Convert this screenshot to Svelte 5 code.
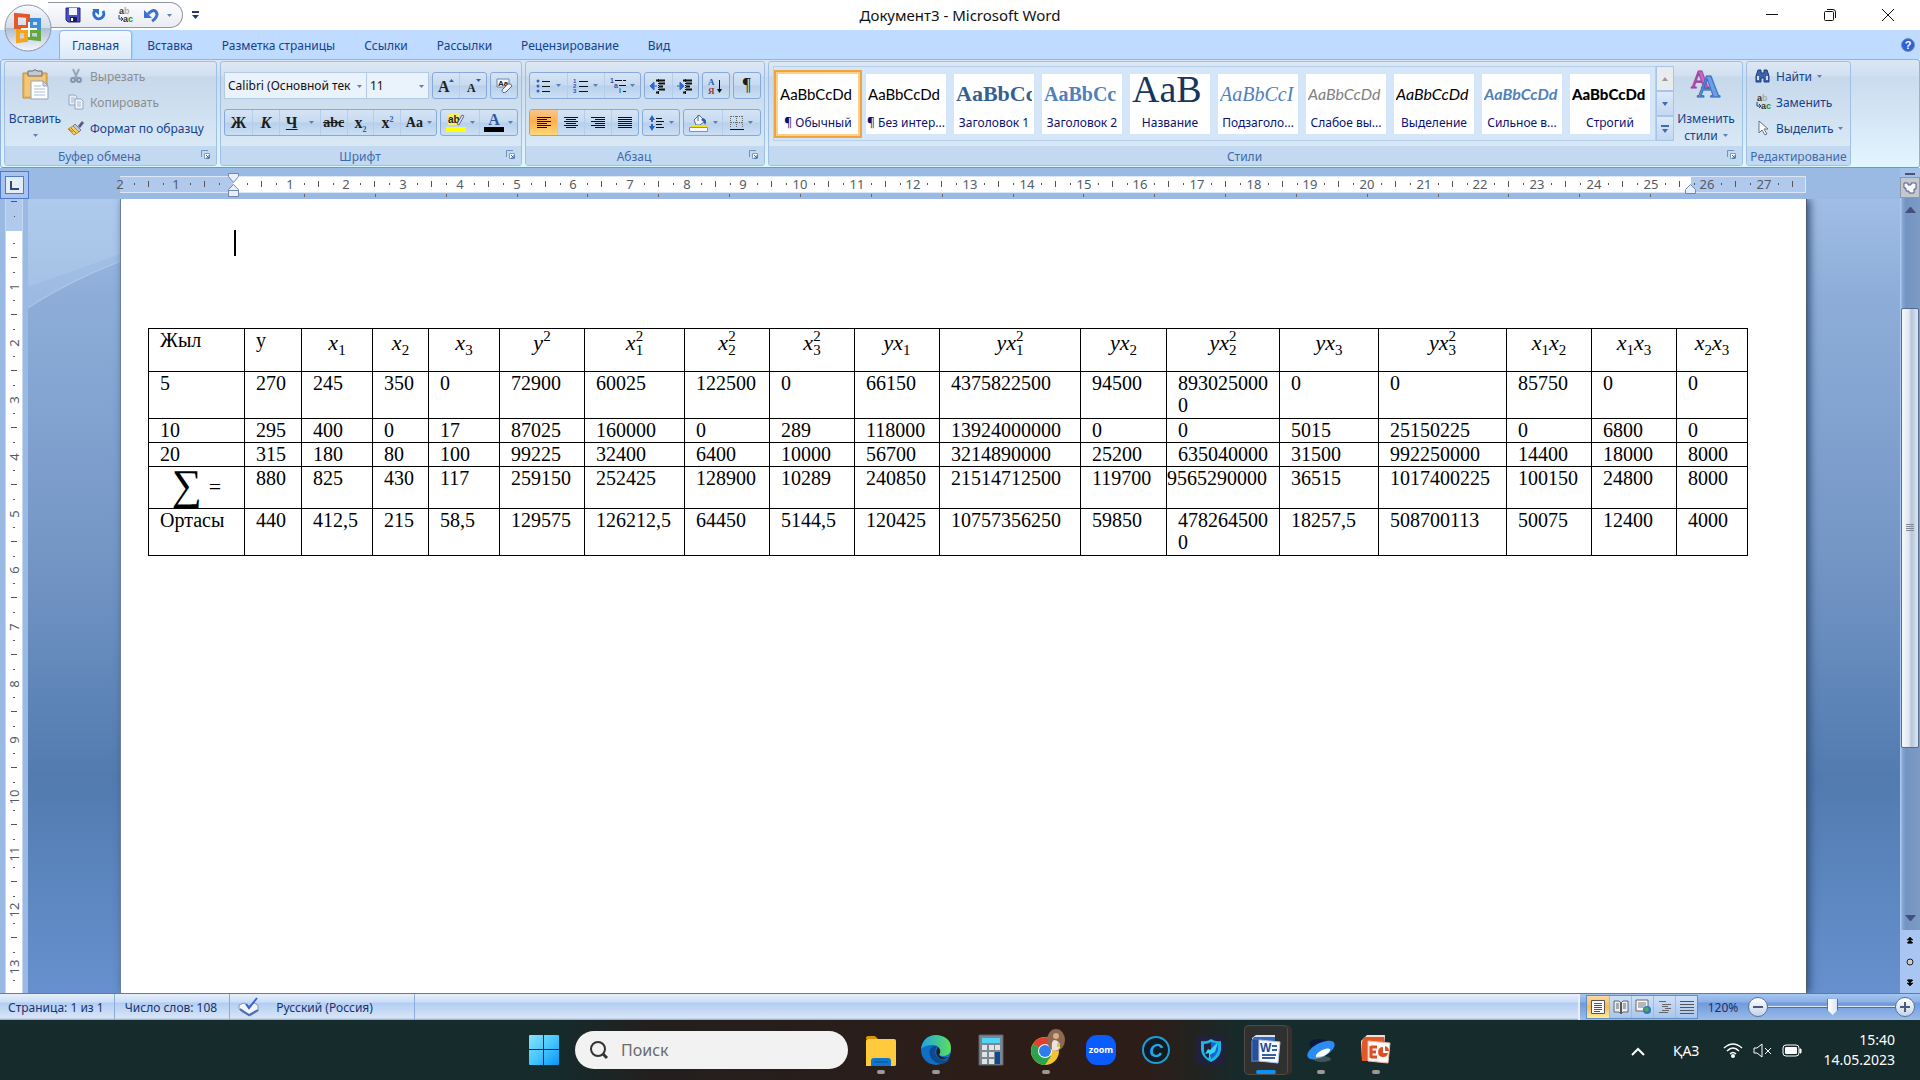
<script>
  const CM = 56.7;

  const tabs = ['Главная', 'Вставка', 'Разметка страницы', 'Ссылки', 'Рассылки', 'Рецензирование', 'Вид'];
  let activeTab = $state('Главная');

  const styles = [
    { sample: 'AaBbCcDd', name: '¶ Обычный', kind: 'normal' },
    { sample: 'AaBbCcDd', name: '¶ Без интер...', kind: 'normal' },
    { sample: 'AaBbCc', name: 'Заголовок 1', kind: 'head1' },
    { sample: 'AaBbCc', name: 'Заголовок 2', kind: 'head2' },
    { sample: 'AaB', name: 'Название', kind: 'title' },
    { sample: 'AaBbCcI', name: 'Подзаголо...', kind: 'sub' },
    { sample: 'AaBbCcDd', name: 'Слабое вы...', kind: 'weak' },
    { sample: 'AaBbCcDd', name: 'Выделение', kind: 'em' },
    { sample: 'AaBbCcDd', name: 'Сильное в...', kind: 'strongem' },
    { sample: 'AaBbCcDd', name: 'Строгий', kind: 'strong' }
  ];
  let activeStyle = $state(0);

  // column widths of the document table
  const cols = [96, 57, 71, 56, 71, 85, 100, 85, 85, 85, 141, 86, 113, 99, 128, 85, 85, 71];

  // header formulas: [letter, subscript, superscript]
  const head = [
    [['x', '1']],
    [['x', '2']],
    [['x', '3']],
    [['y', '', '2']],
    [['x', '1', '2']],
    [['x', '2', '2']],
    [['x', '3', '2']],
    [['y'], ['x', '1']],
    [['y'], ['x', '1', '2']],
    [['y'], ['x', '2']],
    [['y'], ['x', '2', '2']],
    [['y'], ['x', '3']],
    [['y'], ['x', '3', '2']],
    [['x', '1'], ['x', '2']],
    [['x', '1'], ['x', '3']],
    [['x', '2'], ['x', '3']]
  ];

  const rows = [
    { h: 47, cells: ['5', '270', '245', '350', '0', '72900', '60025', '122500', '0', '66150', '4375822500', '94500', '8930250000', '0', '0', '85750', '0', '0'] },
    { h: 24, cells: ['10', '295', '400', '0', '17', '87025', '160000', '0', '289', '118000', '13924000000', '0', '0', '5015', '25150225', '0', '6800', '0'] },
    { h: 24, cells: ['20', '315', '180', '80', '100', '99225', '32400', '6400', '10000', '56700', '3214890000', '25200', '635040000', '31500', '992250000', '14400', '18000', '8000'] },
    { h: 42, sum: true, cells: ['∑', '880', '825', '430', '117', '259150', '252425', '128900', '10289', '240850', '21514712500', '119700', '9565290000', '36515', '1017400225', '100150', '24800', '8000'] },
    { h: 47, cells: ['Ортасы', '440', '412,5', '215', '58,5', '129575', '126212,5', '64450', '5144,5', '120425', '10757356250', '59850', '4782645000', '18257,5', '508700113', '50075', '12400', '4000'] }
  ];

  const rulerMarks = Array.from({ length: 30 }, (_, i) => i - 2);
  const sideMarks = Array.from({ length: 15 }, (_, i) => i);
  const tabStops = Array.from({ length: 20 }, (_, i) => Math.round(184 + i * 70.85));

  const apps = [
    { id: 'explorer', label: 'Проводник', open: true },
    { id: 'edge', label: 'Microsoft Edge', open: true },
    { id: 'calc', label: 'Калькулятор' },
    { id: 'chrome', label: 'Google Chrome', open: true },
    { id: 'zoom', label: 'Zoom' },
    { id: 'ccleaner', label: 'C' },
    { id: 'shield', label: 'Защита' },
    { id: 'word', label: 'Microsoft Word', open: true, active: true },
    { id: 'disk', label: 'Диск', open: true },
    { id: 'ppt', label: 'PowerPoint', open: true }
  ];

  let zoom = $state(51);

  const icons = {
    save: '<path d="M1 1h14v14H3l-2-2z" fill="#4a4fc4" stroke="#26267e"/><path d="M4 1h8v7H4z" fill="#eef3ff"/><path d="M5 10h7v5H5z" fill="#1d1d52"/><path d="M6 11h2v3H6z" fill="#fff"/>',
    redo: '<path d="M4 3.500A5 5 0 1 0 12 4" fill="none" stroke="#2c6fd0" stroke-width="3"/><path d="M1 2h7v6z" fill="#2c6fd0"/>',
    undo: '<path d="M5 7q7-7 9 0 0 4-5 7" fill="none" stroke="#3b6fd4" stroke-width="3"/><path d="M1 3v8h8z" fill="#3b6fd4"/>',
    replace: '<text x="2" y="7" font-family="Liberation Sans" font-size="9" font-weight="bold" fill="#333">a<tspan fill="#aaa">b</tspan></text><path d="M2 8v4h4M4 10l2 2-2 2" fill="none" stroke="#27406e"/><text x="6" y="15" font-family="Liberation Sans" font-size="9" font-weight="bold" fill="#333">a<tspan fill="#169030">c</tspan></text>',
    cut: '<path d="M5 1l4 9M11 1L7 10" stroke="#9aa6ba" stroke-width="2" fill="none"/><circle cx="5" cy="12" r="2" fill="none" stroke="#8494ad" stroke-width="2"/><circle cx="11" cy="12" r="2" fill="none" stroke="#8494ad" stroke-width="2"/>',
    copy: '<path d="M1 1h6l2 2v8H1z" fill="#e9eff8" stroke="#93a4bf"/><path d="M3 4h4M3 6h4M3 8h3" stroke="#a7b6ce"/><path d="M7 5h6l2 2v8H7z" fill="#f3f6fb" stroke="#93a4bf"/><path d="M9 8h4M9 10h4M9 12h4" stroke="#a7b6ce"/>',
    brush: '<path d="M10 6l4-5 2 2-4 5z" fill="#5a5a7c"/><path d="M7 4l6 6-2 2-6-6z" fill="#c4c6d8" stroke="#77799a"/><path d="M5 6l6 6-5 3-6-6z" fill="#f3cf6b" stroke="#c08a28"/><path d="M3 8l5 5M1 9l4 3" stroke="#a97720"/>',
    paste: '<path d="M1 4h24v25H1z" fill="#ecb95c" stroke="#c68c38"/><path d="M3 6h20v21H3z" fill="#f3c774"/><path d="M6 2h5q2-3 4 0h5v5H6z" fill="#c3c8d1" stroke="#686e79"/><path d="M9 12h12l5 5v13H9z" fill="#fff" stroke="#8ea3c4"/><path d="M21 12v5h5z" fill="#cfdcf0" stroke="#8ea3c4"/><path d="M12 17h7M12 20h11M12 23h11M12 26h11" stroke="#a8bbd8"/>',
    eraser: '<path d="M1 1h12v8H1z" fill="#f5f8fd" stroke="#7182a8"/><text x="2" y="8" font-family="Liberation Sans" font-size="8" font-weight="bold" fill="#222">Aa</text><path d="M6 12l6-6q3-1 4 2l-6 6q-4 2-4-2z" fill="#f4f6fa" stroke="#596a8e"/>',
    grow: '<text x="0" y="14" font-family="Liberation Serif" font-size="16" font-weight="bold" fill="#222">A</text><path d="M11 4h5l-2.500-3z" fill="#2c5fa9"/>',
    shrink: '<text x="2" y="14" font-family="Liberation Serif" font-size="12" font-weight="bold" fill="#222">A</text><path d="M11 1h5l-2.500 3z" fill="#2c5fa9"/>',
    bullets: '<circle cx="2" cy="3" r="1.500" fill="#3c62b8"/><circle cx="2" cy="8" r="1.500" fill="#3c62b8"/><circle cx="2" cy="13" r="1.500" fill="#3c62b8"/><path d="M6 3.500h8M6 8.500h8M6 13.500h8" stroke="#111"/>',
    numbers: '<g font-family="Liberation Sans" font-size="6" font-weight="bold" fill="#3154ad"><text x="0" y="5">1</text><text x="0" y="10">2</text><text x="0" y="15">3</text></g><path d="M6 3.500h9M6 8.500h9M6 13.500h9" stroke="#111"/>',
    multi: '<g font-family="Liberation Sans" font-size="7" font-weight="bold" fill="#3154ad"><text x="0" y="5">1</text><text x="4" y="10">a</text><text x="9" y="15">i</text></g><path d="M5 2.500h11M9 7.500h7M13 13.500h3" stroke="#111" stroke-dasharray="7 1"/>',
    outdent: '<path d="M6 2.500h9M9 5.500h6M9 8.500h4M9 11.500h6M6 14.500h3" stroke="#111" stroke-width="2"/><path d="M8.500 1v15" stroke="#111" stroke-dasharray="1 1"/><path d="M4 4L0 8l4 4zM4 8h3" fill="#3068cf" stroke="#3068cf"/>',
    indent: '<path d="M6 2.500h9M9 5.500h6M9 8.500h4M9 11.500h6M6 14.500h3" stroke="#111" stroke-width="2"/><path d="M8.500 1v15" stroke="#111" stroke-dasharray="1 1"/><path d="M3 4l4 4-4 4zM0 8h3" fill="#3068cf" stroke="#3068cf"/>',
    sort: '<g font-family="Liberation Serif" font-size="9" font-weight="bold"><text x="0" y="7" fill="#2e59a8">А</text><text x="0" y="16" fill="#a03a3a">Я</text></g><path d="M11.500 2v11" stroke="#111"/><path d="M9 11h5l-2.500 4z" fill="#111"/>',
    left: '<path d="M0 1.500h14M0 3.500h10M0 5.500h14M0 7.500h10M0 9.500h14M0 11.500h10" stroke="#111"/>',
    center: '<path d="M0 1.500h14M2 3.500h10M0 5.500h14M2 7.500h10M0 9.500h14M2 11.500h10" stroke="#111"/>',
    right: '<path d="M0 1.500h14M4 3.500h10M0 5.500h14M4 7.500h10M0 9.500h14M4 11.500h10" stroke="#111"/>',
    justify: '<path d="M0 1.500h14M0 3.500h14M0 5.500h14M0 7.500h14M0 9.500h14M0 11.500h14" stroke="#111"/>',
    spacing: '<path d="M3 3v10" stroke="#2c5fc9" stroke-width="2" stroke-dasharray="4 2"/><path d="M0 5l3-5 3 5zM0 11l3 5 3-5z" fill="#2c5fc9"/><path d="M7 3.500h6M7 6.500h8M7 9.500h6M7 12.500h8" stroke="#111"/>',
    fill: '<path d="M5 6l5-5 6 6-5 4H7z" fill="#eef2fa" stroke="#556b95"/><path d="M9 1v6" stroke="#556b95"/><path d="M14 4q5 2 2 7-1-4-4-5z" fill="#35599f"/><path d="M2 12h17" stroke="#f1e500" stroke-width="2"/><path d="M.5 13.500h18v4H.5z" fill="#f5f7fb" stroke="#8291ae"/>',
    borders: '<path d="M1 1.500h12M1 7.500h12M.5 1v12M6.500 1v12M12.500 1v12" stroke="#666" stroke-dasharray="1 1"/><path d="M0 14.500h14" stroke="#111"/>',
    find: '<path d="M3 2h3v3h3V2h3l2 6v6H9v-4H6v4H1V8z" fill="#3d63ae" stroke="#1d3c78"/><path d="M3 8v4M12 8v4" stroke="#cadcf8" stroke-width="2"/>',
    select: '<path d="M4 1v12l3-3 3 5 2-1-3-5h4z" fill="#fff" stroke="#64718c"/>',
    changeStyles: '<g font-family="Liberation Serif" font-weight="bold"><text x="0" y="19" font-size="25" fill="#c86cc0" stroke="#9a3f9c">A</text><text x="6" y="28" font-size="32" fill="#6c9fe6" stroke="#3566b8">A</text></g>',
    launcher: '<path d="M.5 7V.5H7" fill="none" stroke="#6f93bf"/><path d="M3.500 3.500h5v5h-5z" fill="#fff" stroke="#7c9cc4"/><path d="M5 5l3 3M8 5v3H5" stroke="#3f6697" fill="none"/>',
    ruler: '<path d="M1 2h4v2h3V2h5v6h-2v4H6v-2H3V7H1z" fill="#fdfdff" stroke="#4c5a86"/>',
    spell: '<path d="M1 8l5-2 5 3 5-3 4 2v6l-8 5-8-4-3-3z" fill="#f3f5fa" stroke="#8a93a8"/><path d="M2 12l9 6 9-5" stroke="#4a6db4" fill="none" stroke-width="2"/><path d="M8 7l3 4L19 1" stroke="#3264c8" stroke-width="2" fill="none"/>',
    viewPrint: '<path d="M1.500 1.500h13v13h-13z" fill="#fff" stroke="#555"/><path d="M4 4.500h8M4 6.500h8M4 8.500h8M4 10.500h8M4 12.500h6" stroke="#555"/>',
    viewRead: '<path d="M1 2h5l2 2 2-2h5v11h-5l-2 2-2-2H1z" fill="#e9edf4" stroke="#666"/><path d="M3 5h3M3 7h3M3 9h3M10 5h3M10 7h3M10 9h3" stroke="#666"/><path d="M8 4v10" stroke="#555" stroke-width="2"/>',
    viewWeb: '<path d="M1 1h12v11H1z" fill="#f6f8fb" stroke="#666"/><path d="M3 4h8M3 6h8M3 8h6" stroke="#777"/><circle cx="12" cy="11" r="4" fill="#2f78c0"/><path d="M9 10q3-4 5 0-1 4-4 2z" fill="#56a84a"/>',
    viewOutline: '<path d="M2 2.500h7M5 5.500h9M5 7.500h6M8 9.500h6M5 11.500h7M2 13.500h9" stroke="#666"/>',
    viewDraft: '<path d="M1 2.500h14M1 5.500h14M1 8.500h14M1 11.500h14M1 14.500h14" stroke="#555"/>',
    explorer: '<path d="M2 6q0-2 2-2h7l3 3H2z" fill="#d99508"/><path d="M2 9q0-2 2-2h26q2 0 2 2v24q0 1-2 1H2z" fill="#ffcb3c"/><path d="M7 34v-5q0-3 3-3h14q3 0 3 3v5z" fill="#0f76cc"/><path d="M10 30h14" stroke="#0a4f95"/>',
    edge: '<defs><linearGradient id="eg" x1="0" y1="0" x2="1" y2="0"><stop offset="0" stop-color="#1fa3e6"/><stop offset="1" stop-color="#5be05a"/></linearGradient></defs><circle cx="17" cy="18" r="15" fill="#0e6fc4"/><path d="M2 17Q4 3 18 3q14 2 14 13 0 8-8 8-6 0-4-5 1-6-6-6-8 0-12 4z" fill="url(#eg)"/><path d="M15 14q-6 2-4 10 3 7 12 8 5-1 8-5-7 3-12-1-5-5-1-12z" fill="#0b4a93"/><path d="M19 15q4 3 1 8 3 4 9 2-4 4-9 1-5-5-1-11z" fill="#231f1e"/>',
    calc: '<path d="M5 3h24v30H5z" fill="#7d8790" stroke="#59626a"/><path d="M8 6h18v5H8z" fill="#4fd4f7"/><path d="M8 13h5v5H8zM15 13h5v5h-5zM21 13h5v5h-5zM8 20h5v5H8zM15 20h5v5h-5zM8 27h5v5H8zM15 27h5v5h-5z" fill="#dfe3e6"/><path d="M21 20h5v12h-5z" fill="#0d4a8f"/>',
    chrome: '<circle cx="16" cy="19" r="14" fill="#f7c52b"/><path d="M16 19L4 12A14 14 0 0 1 29 14z" fill="#e23f33"/><path d="M16 19L4 12a14 14 0 0 0 12 21l6-9z" fill="#2ba24c"/><circle cx="16" cy="19" r="7" fill="#fff"/><circle cx="16" cy="19" r="6" fill="#2f7cf0"/><ellipse cx="27" cy="8" rx="9" ry="11" fill="#8b6a51"/><path d="M23 18q-1-9 2-10 6 0 6 8-3 4-8 2z" fill="#ece4dc"/><circle cx="27" cy="4" r="3" fill="#d8a98a"/><path d="M28 11h3v4h-3z" fill="#d6c84c"/>',
    zoom: '<rect x="2" y="3" width="30" height="30" rx="11" fill="#0b5cff"/><text x="17" y="21" text-anchor="middle" font-family="Open Sans" font-size="9" font-weight="bold" fill="#fff">zoom</text>',
    ccleaner: '<circle cx="17" cy="18" r="13" fill="#101a20" stroke="#1b9ed6" stroke-width="2"/><text x="17" y="25" text-anchor="middle" font-family="Liberation Sans" font-size="19" font-style="italic" font-weight="bold" fill="#1fa9e2">C</text>',
    shield: '<rect x="2" y="3" width="30" height="30" rx="5" fill="#22213c"/><path d="M7 9q6 1 10-2 5 3 10 2v9q-1 8-10 12Q8 26 7 18z" fill="#18b7e8"/><path d="M17 10q3 1 7 1v7q-1 5-7 9z" fill="#1d5ee0"/><path d="M10 12q4 0 7-2v14l-3 2q-4-3-4-8z" fill="#22213c"/><path d="M11 22l3-5 2 1 8-8-3 10-4 2-2 5v-6z" fill="#35d6f0"/>',
    word: '<path d="M3 6l4-3h19v26H3z" fill="#d6e3f7"/><path d="M5 5h21v25H2V9z" fill="#3c69b5"/><path d="M4 8h8v20H4z" fill="#2a4f98"/><path d="M10 8l21 2-2 21-19-2z" fill="#fbfcff" stroke="#b5c7e8"/><text x="11" y="20" font-family="Liberation Sans" font-size="12" font-weight="bold" fill="#234a96">W</text><path d="M23 14h5M23 18h5M13 23h14M13 26h13" stroke="#3460ad" stroke-width="2"/>',
    disk: '<ellipse cx="15" cy="12" rx="10" ry="5" fill="#0b1a3a"/><ellipse cx="17" cy="18" rx="15" ry="7" fill="#2a8cf4" transform="rotate(-28 17 18)"/><ellipse cx="19" cy="21" rx="8" ry="3" fill="#fff" transform="rotate(-28 19 21)"/><ellipse cx="18" cy="27" rx="9" ry="3" fill="#7d98a0" opacity=".4"/>',
    ppt: '<path d="M8 3h18l-2 26H3l-1-20z" fill="#f6e1d8"/><path d="M5 5h20v24H3V10z" fill="#e2582b"/><path d="M9 9l22 2-2 20-20-2z" fill="#fdfaf8" stroke="#e5bca9"/><path d="M12 15h6M12 20h5M12 25h6M12 14v12" stroke="#dd4f22" stroke-width="3" fill="none"/><path d="M24 15a5 5 0 1 0 5 6h-5z" fill="#dd4f22"/><path d="M26 14v5h4q0-4-4-5z" fill="#dd4f22"/>',
    wifi: '<g fill="none" stroke="#fff"><path d="M1 6q9-8 18 0M4 9q6-6 12 0M7 12q3-3 6 0" stroke-width="1.500"/></g><circle cx="10" cy="14" r="2" fill="#fff"/>',
    mute: '<path d="M1 5h3l5-4v13l-5-4H1zM12 5l6 6M18 5l-6 6" fill="none" stroke="#fff"/>',
    battery: '<rect x="1" y="2" width="16" height="11" rx="3" fill="none" stroke="#fff"/><rect x="3" y="4" width="12" height="7" rx="1" fill="#fff"/><path d="M18 6v4h1V6z" fill="#fff" stroke="#fff"/>'
  };
</script>

{#snippet icon(name, w = 16, h = 16)}
  <svg class="icon" width={w} height={h} viewBox="0 0 {w} {h}" aria-hidden="true">{@html icons[name]}</svg>
{/snippet}

{#snippet arrow()}
  <svg class="icon arrow" width="5" height="3" viewBox="0 0 5 3" aria-hidden="true"><path d="M0 0h5L2.500 3z" fill="#5a82b8" /></svg>
{/snippet}

{#snippet formula(parts)}
  <span class="formula">
    {#each parts as [letter, low, high]}
      <i>{letter}</i>{#if low || high}<span class="scripts"><span>{high}</span><span>{low}</span></span>{/if}
    {/each}
  </span>
{/snippet}

<div class="screen">
  <header class="titlebar">
    <button class="orb" aria-label="Office">
      <svg width="50" height="50" viewBox="0 0 50 50">
        <defs>
          <linearGradient id="orb" x1="0" y1="0" x2="0" y2="1">
            <stop offset="0" stop-color="#fafcff" /><stop offset=".5" stop-color="#d2dbe8" />
            <stop offset=".5" stop-color="#aebdd1" /><stop offset="1" stop-color="#f4f8fd" />
          </linearGradient>
        </defs>
        <circle cx="25" cy="25" r="23" fill="url(#orb)" stroke="#8a97ab" />
        <g fill="none" stroke-width="4">
          <path d="M13 12l12 1v11H13z" stroke="#e2592a" />
          <path d="M28 17h8v7h-8z" stroke="#3b8fd8" />
          <path d="M15 28h8v9l-8 1z" stroke="#f3a51f" />
          <path d="M27 28h9v8l-9-1z" stroke="#62a83e" />
        </g>
        <path d="M26 19v15M18 26h16" stroke="#fff" stroke-width="2" />
      </svg>
    </button>
    <div class="qat">
      <button aria-label="Сохранить">{@render icon('save')}</button>
      <button aria-label="Повторить">{@render icon('redo')}</button>
      <button aria-label="Заменить">{@render icon('replace')}</button>
      <button aria-label="Отменить">{@render icon('undo')}</button>
      <button class="narrow" aria-label="Список отмены">{@render arrow()}</button>
    </div>
    <button class="qat-more" aria-label="Настройка панели">
      <svg width="7" height="8" viewBox="0 0 7 8"><path d="M0 1h7" stroke="#1e3c7b" stroke-width="2" /><path d="M0 4h7L3.500 8z" fill="#1e3c7b" /></svg>
    </button>
    <h1>Документ3 - Microsoft Word</h1>
    <div class="window-buttons">
      <button aria-label="Свернуть"><svg width="12" height="12"><path d="M0 5.500h12" stroke="#111" /></svg></button>
      <button aria-label="Свернуть в окно"><svg width="12" height="12" fill="none" stroke="#111"><rect x="0.500" y="2.500" width="9" height="9" rx="1" /><path d="M3 .5h6q2.500 0 2.500 2.500v6" /></svg></button>
      <button aria-label="Закрыть"><svg width="12" height="12"><path d="M0 0l12 12M12 0L0 12" stroke="#111" /></svg></button>
    </div>
  </header>

  <nav class="tabs">
    {#each tabs as tab}
      <button class:active={tab === activeTab} onclick={() => (activeTab = tab)}>{tab}</button>
    {/each}
    <button class="help" aria-label="Справка">
      <svg width="14" height="14" viewBox="0 0 14 14"><circle cx="7" cy="7" r="6.500" fill="#2a61d8" stroke="#7591c4" /><text x="7" y="11" text-anchor="middle" font-family="Liberation Sans" font-size="11" font-weight="bold" fill="#fff">?</text></svg>
    </button>
  </nav>

  <section class="ribbon">
    <div class="group clipboard">
      <div class="group-body">
        <button class="big paste">{@render icon('paste', 27, 31)}<span>Вставить</span>{@render arrow()}</button>
        <div class="stack">
          <button class="line disabled">{@render icon('cut')}Вырезать</button>
          <button class="line disabled">{@render icon('copy')}Копировать</button>
          <button class="line">{@render icon('brush')}Формат по образцу</button>
        </div>
      </div>
      <footer class="has-launcher">Буфер обмена<button aria-label="Параметры буфера">{@render icon('launcher', 10, 10)}</button></footer>
    </div>

    <div class="group font">
      <div class="group-body rows">
        <div class="row">
          <label class="combo face"><select aria-label="Шрифт"><option>Calibri (Основной тек</option></select>{@render arrow()}</label>
          <label class="combo size"><select aria-label="Размер"><option>11</option></select>{@render arrow()}</label>
          <div class="set">
            <button aria-label="Увеличить">{@render icon('grow')}</button>
            <button aria-label="Уменьшить">{@render icon('shrink')}</button>
          </div>
          <div class="set"><button aria-label="Очистить формат">{@render icon('eraser')}</button></div>
        </div>
        <div class="row">
          <div class="set">
            <button class="serif"><b>Ж</b></button>
            <button class="serif"><i><b>К</b></i></button>
            <button class="serif wider"><u><b>Ч</b></u>{@render arrow()}</button>
            <button class="serif small"><s>abc</s></button>
            <button class="serif"><b>x<sub>2</sub></b></button>
            <button class="serif"><b>x<sup>2</sup></b></button>
            <button class="serif mid small">Aa{@render arrow()}</button>
          </div>
          <div class="set">
            <button class="wide" aria-label="Выделение цветом">
              <svg class="icon" width="20" height="20" viewBox="0 0 20 20"><rect x="2" y="1" width="11" height="11" fill="#f3ee6b" /><text x="2" y="10" font-family="Liberation Sans" font-size="10" font-weight="bold" fill="#222">ab</text><path d="M11 11l5-9 2 1-5 9z" fill="#dbe3f0" stroke="#5f6f90" /><path d="M0 14h20v5H0z" fill="#ff0" /></svg>
              {@render arrow()}
            </button>
            <button class="wide" aria-label="Цвет текста">
              <svg class="icon" width="20" height="20" viewBox="0 0 20 20"><text x="10" y="12" text-anchor="middle" font-family="Liberation Serif" font-size="16" font-weight="bold" fill="#33579f">A</text><path d="M0 14h20v5H0z" fill="#000" /></svg>
              {@render arrow()}
            </button>
          </div>
        </div>
      </div>
      <footer class="has-launcher">Шрифт<button aria-label="Параметры шрифта">{@render icon('launcher', 10, 10)}</button></footer>
    </div>

    <div class="group para">
      <div class="group-body rows">
        <div class="row">
          <div class="set">
            <button class="wide" aria-label="Маркеры">{@render icon('bullets')}{@render arrow()}</button>
            <button class="wide" aria-label="Нумерация">{@render icon('numbers')}{@render arrow()}</button>
            <button class="wide" aria-label="Многоуровневый список">{@render icon('multi')}{@render arrow()}</button>
          </div>
          <div class="set">
            <button aria-label="Уменьшить отступ">{@render icon('outdent')}</button>
            <button aria-label="Увеличить отступ">{@render icon('indent')}</button>
          </div>
          <div class="set"><button aria-label="Сортировка">{@render icon('sort')}</button></div>
          <div class="set"><button class="pilcrow">¶</button></div>
        </div>
        <div class="row">
          <div class="set">
            <button class="on" aria-label="По левому краю">{@render icon('left', 14, 13)}</button>
            <button aria-label="По центру">{@render icon('center', 14, 13)}</button>
            <button aria-label="По правому краю">{@render icon('right', 14, 13)}</button>
            <button aria-label="По ширине">{@render icon('justify', 14, 13)}</button>
          </div>
          <div class="set"><button class="mid" aria-label="Интервал">{@render icon('spacing')}{@render arrow()}</button></div>
          <div class="set">
            <button class="wide" aria-label="Заливка">{@render icon('fill', 20, 18)}{@render arrow()}</button>
            <button class="wide" aria-label="Границы">{@render icon('borders', 14, 15)}{@render arrow()}</button>
          </div>
        </div>
      </div>
      <footer class="has-launcher">Абзац<button aria-label="Параметры абзаца">{@render icon('launcher', 10, 10)}</button></footer>
    </div>

    <div class="group styles">
      <div class="group-body">
        <div class="gallery">
          {#each styles as style, i}
            <button class="card {style.kind}" class:selected={i === activeStyle} onclick={() => (activeStyle = i)}>
              <span class="sample">{style.sample}</span>
              <span class="name">{style.name}</span>
            </button>
          {/each}
        </div>
        <div class="gallery-nav">
          <button class="off" aria-label="Вверх"><svg width="6" height="4"><path d="M0 4h6L3 0z" fill="#999" /></svg></button>
          <button aria-label="Вниз"><svg width="6" height="4"><path d="M0 0h6L3 4z" fill="#3f6bb0" /></svg></button>
          <button aria-label="Все стили"><svg width="8" height="8"><path d="M0 1h8" stroke="#3f6bb0" stroke-width="2" /><path d="M1 4h6L4 8z" fill="#3f6bb0" /></svg></button>
        </div>
        <button class="big change">{@render icon('changeStyles', 30, 30)}<span>Изменить<br />стили {@render arrow()}</span></button>
      </div>
      <footer class="has-launcher">Стили<button aria-label="Окно стилей">{@render icon('launcher', 10, 10)}</button></footer>
    </div>

    <div class="group edit">
      <div class="group-body">
        <div class="stack">
          <button class="line">{@render icon('find')}Найти {@render arrow()}</button>
          <button class="line">{@render icon('replace')}Заменить</button>
          <button class="line">{@render icon('select')}Выделить {@render arrow()}</button>
        </div>
      </div>
      <footer>Редактирование</footer>
    </div>
  </section>

  <main class="workspace">
    <div class="desk">
      <div class="ruler-row">
        <button class="tab-kind" aria-label="Тип табуляции"><svg width="9" height="9"><path d="M1 0v8h8" fill="none" stroke="#33476e" stroke-width="2" /></svg></button>
        <svg class="ruler" height="28" aria-hidden="true">
          <rect x="0" y="5" width="1686" height="17" fill="#b0c9ec" />
          <rect x="113" y="5" width="1458" height="17" fill="#fff" />
          <path d="M0 5.500h1685.500v16H0" fill="none" stroke="#dbe7f7" />
          {#each rulerMarks as n}
            {@const x = Math.round(113 + n * CM)}
            {#if n !== 0}<text {x} y="18" text-anchor="middle">{Math.abs(n)}</text>{/if}
            <path d="M{x + 14} 13h1" stroke="#555" stroke-width="2" />
            <path d="M{x + 28}.5 10v6" stroke="#555" />
            {#if n < 27}<path d="M{x + 43} 13h1" stroke="#555" stroke-width="2" />{/if}
          {/each}
          {#each tabStops as x}<path d="M{x}.5 23v3" stroke="#666" />{/each}
          <path d="M108.500 2.500h10v3l-5 6-5-6zM113.500 13.500l5 5v7h-10v-7zM108.500 19.500h10" fill="#e8eff9" stroke="#7187ae" />
          <path d="M1570.500 13.500l5 5v4h-10v-4z" fill="#e8eff9" stroke="#7187ae" />
        </svg>
      </div>
      <div class="desk-body">
        <svg class="side-ruler" width="28" aria-hidden="true">
          <rect x="6" y="0" width="16" height="32" fill="#b0c9ec" />
          <rect x="6" y="32" width="16" height="100%" fill="#fff" />
          <path d="M5.500 0v900M22.500 0v900" stroke="#c6d8f0" />
          <path d="M11 2.500h6M14 17.500h1" stroke="#555" />
          {#each sideMarks as n}
            {@const y = Math.round(32 + n * CM)}
            {#if n > 0}<text transform="translate(19 {y - 1}) rotate(-90)" text-anchor="middle">{n}</text>{/if}
            <path d="M13 {y + 12}.5h2M11 {y + 26}.5h6M13 {y + 41}.5h2" stroke="#555" />
          {/each}
        </svg>
        <div class="canvas">
          <svg class="swoosh" width="93" height="160" viewBox="0 0 93 160" aria-hidden="true">
            <path d="M0 0h93v55Q40 74 0 88z" fill="#c2daf3" opacity=".45" />
            <path d="M0 88Q40 74 93 55v7Q40 84 0 109z" fill="#b3cfef" opacity=".4" />
            <path d="M0 109Q40 82 93 62" fill="none" stroke="#b7d0ef" opacity=".7" />
          </svg>
          <article class="page">
            <div class="caret"></div>
            <table>
              <colgroup>{#each cols as w}<col style="width: {w}px" />{/each}</colgroup>
              <tbody>
                <tr style="height: 43px">
                  <td>Жыл</td>
                  <td>у</td>
                  {#each head as parts}<td class="math">{@render formula(parts)}</td>{/each}
                </tr>
                {#each rows as row}
                  <tr style="height: {row.h}px">
                    {#each row.cells as cell, i}
                      {#if row.sum && i === 0}
                        <td class="sum"><span class="sum-line"><span class="sigma">{cell}</span><span>=</span></span></td>
                      {:else}
                        <td class:flush={row.sum && i === 12}>{cell}</td>
                      {/if}
                    {/each}
                  </tr>
                {/each}
              </tbody>
            </table>
          </article>
        </div>
      </div>
    </div>
    <aside class="scroll">
      <div class="split"></div>
      <button class="ruler-toggle" aria-label="Линейка">{@render icon('ruler', 14, 13)}</button>
      <button class="step" aria-label="Прокрутить вверх"><svg width="11" height="6"><path d="M0 6l5-6h1l5 6z" fill="#444f7c" /></svg></button>
      <div class="track"><div class="thumb"><i></i><i></i><i></i><i></i></div></div>
      <button class="step" aria-label="Прокрутить вниз"><svg width="11" height="6"><path d="M0 0h11L6 6H5z" fill="#444f7c" /></svg></button>
      <div class="browse">
        <button aria-label="Предыдущая страница"><svg width="6" height="7"><path d="M3 0l3 3H0zM3 3l3 3H0zM1 6.500h4" fill="#000" stroke="#000" stroke-width=".5" /></svg></button>
        <button aria-label="Выбор объекта"><svg width="8" height="8"><circle cx="4" cy="4" r="3" fill="#ccc" stroke="#222" /></svg></button>
        <button aria-label="Следующая страница"><svg width="6" height="7"><path d="M3 7l3-3H0zM3 4l3-3H0zM1 .5h4" fill="#000" stroke="#000" stroke-width=".5" /></svg></button>
      </div>
    </aside>
  </main>

  <div class="status">
    <span class="cell">Страница: 1 из 1</span>
    <span class="cell">Число слов: 108</span>
    <span class="cell lang">{@render icon('spell', 22, 20)}Русский (Россия)</span>
    <div class="status-right">
      <div class="views">
        <button class="on" aria-label="Разметка страницы">{@render icon('viewPrint')}</button>
        <button aria-label="Режим чтения">{@render icon('viewRead')}</button>
        <button aria-label="Веб-документ">{@render icon('viewWeb')}</button>
        <button aria-label="Структура">{@render icon('viewOutline')}</button>
        <button aria-label="Черновик">{@render icon('viewDraft')}</button>
      </div>
      <span class="percent">120%</span>
      <button class="round" aria-label="Уменьшить масштаб"><svg width="10" height="10"><path d="M0 5h10" stroke="#4b5a78" stroke-width="2" /></svg></button>
      <input type="range" min="0" max="100" bind:value={zoom} aria-label="Масштаб" />
      <button class="round" aria-label="Увеличить масштаб"><svg width="10" height="10"><path d="M0 5h10M5 0v10" stroke="#4b5a78" stroke-width="2" /></svg></button>
    </div>
  </div>

  <footer class="taskbar">
    <div class="dock">
      <button class="start" aria-label="Пуск">
        <svg width="30" height="30" viewBox="0 0 30 30">
          <defs><linearGradient id="win" x1="0" y1="0" x2="1" y2="1"><stop offset="0" stop-color="#8be0fd" /><stop offset=".5" stop-color="#45c8fb" /><stop offset="1" stop-color="#0a93f7" /></linearGradient></defs>
          <path d="M1 0h13v14H0V1q0-1 1-1zM15 0h14q1 0 1 1v13H15zM0 15h14v15H1q-1 0-1-1zM15 15h15v14q0 1-1 1H15z" fill="url(#win)" />
        </svg>
      </button>
      <label class="search">
        <svg width="20" height="20" viewBox="0 0 20 20" fill="none" stroke="#333" stroke-width="2"><circle cx="9" cy="9" r="7" /><path d="M14 14l4 4" stroke-width="3" /></svg>
        <input type="text" placeholder="Поиск" aria-label="Поиск" />
      </label>
      {#each apps as app}
        <button class="app" class:open={app.open} class:active={app.active} aria-label={app.label}>{@render icon(app.id, 34, 36)}</button>
      {/each}
    </div>
    <div class="tray">
      <button class="more" aria-label="Скрытые значки"><svg width="14" height="9"><path d="M1 8l6-6 6 6" fill="none" stroke="#fff" stroke-width="2" /></svg></button>
      <button class="input-lang">ҚАЗ</button>
      <button class="system" aria-label="Сеть, звук, батарея">{@render icon('wifi', 20, 16)}{@render icon('mute', 19, 15)}{@render icon('battery', 20, 15)}</button>
      <button class="clock"><span>15:40</span><span>14.05.2023</span></button>
    </div>
  </footer>
</div>

<style>
  :global(body) { margin: 0; }
  .screen {
    display: flex; flex-direction: column; min-height: 100vh; overflow: hidden;
    font-family: "Noto Sans", "Open Sans", sans-serif; font-size: 12px; color: #15428b;
  }
  button {
    display: flex; align-items: center; justify-content: center;
    margin: 0; padding: 0; border: 0; background: none; font: inherit; color: inherit;
  }
  svg { flex: none; display: block; }
  .icon { overflow: visible; }
  .arrow { display: inline-block; }

  .titlebar { position: relative; display: flex; align-items: center; height: 30px; background: #fff; }
  .orb { position: absolute; left: 3px; top: 3px; z-index: 2; }
  .qat {
    display: flex; align-items: center; gap: 10px; box-sizing: border-box;
    height: 26px; width: 135px; margin-left: 48px; padding-left: 17px;
    border: 1px solid #8f97a3; border-left: 0; border-radius: 0 13px 13px 0;
    background: linear-gradient(#fcfcfd, #e9ecf1);
  }
  .qat .narrow { margin-left: -2px; }
  .qat-more { margin-left: 9px; }
  h1 {
    position: absolute; left: 0; right: 0; margin: 0; text-align: center;
    font-size: 15px; font-weight: 400; color: #111; pointer-events: none;
  }
  .window-buttons { display: flex; margin-left: auto; padding-right: 3px; }
  .window-buttons button { width: 58px; height: 30px; }

  .tabs { display: flex; height: 29px; padding-left: 60px; padding-right: 5px; background: #bfdbff; align-items: flex-end; }
  .tabs button { height: 28px; margin-right: 1px; padding: 0 14px; }
  .tabs .active {
    padding: 0 12px; margin-right: 2px; border-radius: 4px 4px 0 0;
    background: linear-gradient(#f4f9ff, #dce9f8); box-shadow: 0 0 0 1px #8fb4e4, 1px 0 3px #6fd3e6;
    clip-path: inset(-3px -4px 0 -4px);
  }
  .tabs .help { margin: 0 0 0 auto; padding: 0; }

  .ribbon {
    display: flex; gap: 3px; box-sizing: border-box; height: 109px; padding: 1px 3px;
    border: 1px solid #8db2e3; border-bottom-color: #7996b8; border-radius: 3px;
    background: linear-gradient(#dbe6f4 0, #cfdff1 16px, #c9dbef 17px, #e3f5fe 100%);
    box-shadow: inset 0 -2px 1px #d8fafd;
  }
  .workspace, .status { background-color: #9bbae3; }
  .group {
    display: flex; flex-direction: column; box-sizing: border-box; height: 105px;
    border: 1px solid #9fbfe3; border-radius: 3px; overflow: hidden;
    background: linear-gradient(#dee8f5 0, #d1dfef 14px, #c7d8ec 15px, #d8e8f5 84px);
  }
  .group-body { display: flex; flex: 1; }
  .group footer {
    position: relative; height: 19px; line-height: 22px; text-align: center;
    background: #c2d9f1; color: #3e6aaa;
  }
  .group .has-launcher { padding-right: 22px; }
  .group footer button { position: absolute; right: 5px; top: 4px; }
  .clipboard { width: 213px; }
  .font { width: 302px; }
  .para { width: 240px; }
  .styles { flex: 1; max-width: 975px; }
  .edit { width: 105px; }

  .big { flex-direction: column; justify-content: flex-start; }
  .paste { width: 60px; padding-top: 7px; gap: 10px; }
  .paste span { line-height: 18px; }
  .paste .arrow { margin-top: -4px; }
  .stack { display: flex; flex-direction: column; padding-top: 1px; }
  .line { height: 26px; justify-content: flex-start; gap: 5px; padding: 0 3px; white-space: nowrap; }
  .clipboard .line { gap: 6px; }
  .disabled { color: #8d8d8d; }

  .rows { flex-direction: column; padding: 10px 3px 0; gap: 10px; }
  .row { display: flex; gap: 3px; }
  .combo { position: relative; display: flex; box-sizing: border-box; height: 27px; border: 1px solid #b3c9e6; background: #eaf2fb; }
  .combo .arrow { position: absolute; right: 4px; top: 12px; pointer-events: none; }
  .combo select {
    appearance: none; width: 100%; padding: 0 10px 0 3px; border: 0; background: none;
    font: inherit; color: #111; outline: 0;
  }
  .face { width: 146px; }
  .size { width: 64px; margin-left: -4px; }
  .set {
    display: flex; box-sizing: border-box; height: 27px; border: 1px solid #86a9d9; border-radius: 3px; overflow: hidden;
    background: linear-gradient(#d6e4f5 0, #c7daf0 12px, #b8d0ec 13px, #cbdff4);
  }
  .set button { width: 27px; border-left: 1px solid #b3cdea; color: #1c1c1c; box-sizing: border-box; }
  .set button:first-child { border-left: 0; }
  .set .wide { width: 38px; gap: 4px; }
  .set .wider { width: 41px; gap: 11px; }
  .set .mid { width: 36px; gap: 4px; }
  .set .on { background: linear-gradient(#f8c78f, #fbaf4d 45%, #fdd87a); }
  .serif { font-family: "Liberation Serif", serif; font-size: 16px; font-weight: 700; }
  .serif sup, .serif sub { font-size: 8px; line-height: 0; color: #2c5fa9; }
  .serif.small { font-size: 14px; }
  .pilcrow { font-family: "Liberation Serif", serif; font-size: 18px; }

  .styles .group-body { padding: 4px 4px 0; }
  .gallery {
    display: flex; flex: 1; gap: 8px; height: 75px; box-sizing: border-box; padding: 7px 4px;
    border: 1px solid #b8cfec; background: #d5e6f8; overflow: hidden;
  }
  .card {
    flex: none; flex-direction: column; justify-content: flex-end; width: 80px; height: 60px; box-sizing: border-box;
    background: #fff; color: #000; white-space: nowrap;
  }
  .card.selected { box-shadow: 0 0 0 2px #fbd08a, 0 0 0 4px #f0a440; }
  .sample {
    width: 76px; height: 40px; line-height: 40px; overflow: hidden; text-align: left;
    font-family: Lato, sans-serif; font-size: 16px;
  }
  .name { height: 20px; line-height: 18px; color: #0b1270; }
  .normal .sample { font-size: 15px; }
  .head1 .sample, .head2 .sample, .title .sample, .sub .sample { font-family: "Liberation Serif", serif; }
  .head1 .sample { font-size: 22px; font-weight: 700; color: #365f91; }
  .head2 .sample { font-size: 20px; font-weight: 700; color: #4f81bd; }
  .title .sample { font-size: 38px; line-height: 30px; color: #17365d; }
  .sub .sample { font-size: 20px; font-style: italic; color: #4f81bd; }
  .weak .sample { font-style: italic; color: #808080; }
  .em .sample { font-style: italic; }
  .strongem .sample { font-style: italic; font-weight: 700; color: #4f81bd; }
  .strong .sample { font-size: 15px; font-weight: 900; }
  .gallery-nav { display: flex; flex-direction: column; width: 18px; height: 75px; }
  .gallery-nav button { flex: 1; border: 1px solid #a9c4e8; background: linear-gradient(#dce9f8, #c3d8f2); }
  .gallery-nav .off { background: #e9ebee; }
  .change { width: 64px; padding-top: 3px; gap: 11px; line-height: 17px; }
  .change .arrow { vertical-align: 3px; margin-left: 2px; }
  .edit .stack { padding-left: 5px; }

  .workspace { display: flex; flex: 1; padding-top: 3px; }
  .desk { display: flex; flex: 1; flex-direction: column; min-width: 0; }
  .ruler-row { display: flex; height: 28px; background: #9bbae3; }
  .tab-kind { width: 29px; box-sizing: border-box; border: 1px solid #4f79cc; box-shadow: inset 0 0 0 4px #a9c4ec, inset 0 0 0 5px #4f79cc; background: #e3edf9; }
  .ruler { flex: 1; min-width: 0; margin-left: 91px; overflow: visible; }
  .ruler text, .side-ruler text { font-family: "Noto Sans", sans-serif; font-size: 13px; fill: #555b66; }
  .desk-body { display: flex; flex: 1; background: #9bbae3; }
  .side-ruler { height: 100%; min-height: 700px; contain: size; }
  .canvas {
    position: relative; display: flex; flex: 1; min-width: 0; padding: 0 93px 0 92px; overflow: hidden;
    background: linear-gradient(#9fbde6 0, #8eaed9 12%, #7496c5 45%, #527bb0 73%, #6691ce 100%);
  }
  .swoosh { position: absolute; left: 0; top: 0; }
  .page {
    position: relative; flex: 1; min-width: 0; background: #fff; box-sizing: border-box; padding: 31px 28px 0;
    border-left: 1px solid #6b7f9c; border-right: 1px solid #4a5a70; box-shadow: 3px 0 8px #33527c;
  }
  .caret { width: 2px; height: 26px; margin-left: 85px; margin-bottom: 72px; background: #000; }

  table {
    border-collapse: collapse; table-layout: fixed; width: 1599px; margin-left: -1px;
    font-family: "Liberation Serif", serif; font-size: 20px; line-height: 22px; color: #000;
  }
  td { border: 1px solid #000; padding: 0 10px 0 11px; vertical-align: top; word-break: break-all; }
  .math { padding: 0; text-align: center; }
  .formula { display: inline-flex; align-items: center; height: 28px; font-size: 22px; }
  .scripts { display: inline-flex; flex-direction: column; font-size: 15px; line-height: 14px; text-align: left; }
  .scripts span { min-height: 14px; }
  .flush { padding-left: 0; }
  .sum { padding: 0; white-space: nowrap; }
  .sum-line { display: flex; align-items: center; justify-content: center; gap: 7px; height: 40px; font-size: 22px; }
  .sigma { height: 40px; font-size: 42px; line-height: 36px; }

  .scroll { display: flex; flex-direction: column; width: 20px; background: linear-gradient(90deg, #a9c8f2 1px, #8aa8d2 2px, #7394c2 6px, #7c9ac4); }
  .split { height: 2px; margin: 2px 5px; background: #4a5372; box-shadow: 0 0 0 5px #a3c1ea; }
  .ruler-toggle { position: relative; height: 21px; background: #c3c7d0; border: 1px solid #9098a8; }
  .step { height: 24px; }
  .track { display: flex; flex: 1; flex-direction: column; }
  .thumb {
    display: flex; flex-direction: column; align-items: center; justify-content: center; gap: 1px;
    height: 64%; margin: 86px 1px 0; border: 1px solid #56698f; border-radius: 2px;
    background: linear-gradient(90deg, #f6f9fc, #e3e9f0 40%, #b6c6da 60%, #dfe7f0);
  }
  .thumb i { width: 8px; height: 1px; background: #808893; }
  .browse { display: flex; flex-direction: column; height: 63px; background: #a8c6f1; }
  .browse button { flex: 1; }

  .status {
    display: flex; box-sizing: border-box; height: 27px; border-top: 1px solid #4f7fbf; color: #17336f;
    background: linear-gradient(#e6effb 0, #cbdef7 8px, #b2cdf3 9px, #d8e5f7 24px, #8aa5c8);
  }
  .cell { display: flex; align-items: center; padding: 0 10px 0 8px; border-right: 1px solid #8bacd9; }
  .cell + .cell { padding: 0 12px 0 10px; }
  .cell.lang { gap: 16px; padding: 0 41px 0 8px; }
  .status-right {
    display: flex; align-items: center; margin-left: auto; padding: 0 5px 0 6px; border-left: 2px solid #e8f0fb;
    background: linear-gradient(#a6c6f2 0, #8bb0e5 8px, #6f9add 9px, #9cbce8);
  }
  .views { display: flex; height: 22px; border: 1px solid #5f8cc6; background: linear-gradient(#cfe0f7, #a9c6ee); }
  .views button { width: 22px; border-left: 1px solid #9fbbe2; box-sizing: border-box; }
  .views .on { border: 0; background: linear-gradient(#fbd9a0, #f8b95a, #fdee9c); }
  .percent { width: 50px; text-align: center; color: #1d2f6b; }
  .round { width: 20px; height: 20px; border: 1px solid #56739f; border-radius: 50%; background: linear-gradient(#fff, #c4d3e8); box-sizing: border-box; }
  .status input { appearance: none; width: 127px; height: 20px; margin: 0; background: none; }
  .status input::-webkit-slider-runnable-track { height: 16px; background: linear-gradient(transparent 7px, #dce9fb 7px, #dce9fb 8px, #4b6ea5 8px, #4b6ea5 9px, transparent 9px); }
  .status input::-webkit-slider-thumb {
    appearance: none; width: 11px; height: 16px; background: linear-gradient(90deg, #4d6fa5 1px, #fff 1px, #d8e4f5 10px, #4d6fa5 10px);
    clip-path: polygon(0 0, 100% 0, 100% 65%, 50% 100%, 0 65%);
  }

  .taskbar {
    position: relative; display: flex; align-items: center; height: 60px; color: #fff; font-size: 14px;
    background: linear-gradient(90deg, #152b2c 29%, #231f1e 34%, #2c1d18 50%, #2c1d18 60%, #162b2c 65%);
  }
  .dock { display: flex; align-items: center; margin: 0 auto; padding-left: 7px; gap: 11px; }
  .start { margin-right: 5px; }
  .search { display: flex; align-items: center; gap: 12px; box-sizing: border-box; width: 273px; height: 38px; padding-left: 14px; border-radius: 19px; background: #f2f2f2; }
  .search input { flex: 1; min-width: 0; padding: 0; border: 0; outline: 0; background: none; font: inherit; font-size: 16px; }
  .search input::placeholder { color: #6a6a6a; }
  .app { position: relative; width: 44px; height: 50px; border-radius: 5px; }
  .app.active { background: #45383180; box-shadow: inset 0 0 0 1px #574a44, 4px 0 0 #3a302b; }
  .app.open::after { content: ''; position: absolute; bottom: 1px; left: 18px; width: 8px; height: 4px; border-radius: 2px; background: #9c9896; }
  .app.active::after { left: 12px; width: 20px; background: #0a91f5; }
  .tray { position: absolute; right: 0; display: flex; align-items: center; height: 60px; padding-right: 25px; }
  .more { margin-top: 2px; }
  .input-lang { margin-left: 28px; }
  .system { gap: 10px; margin-left: 24px; }
  .clock { flex-direction: column; align-items: flex-end; margin-left: 21px; line-height: 20px; }
</style>
